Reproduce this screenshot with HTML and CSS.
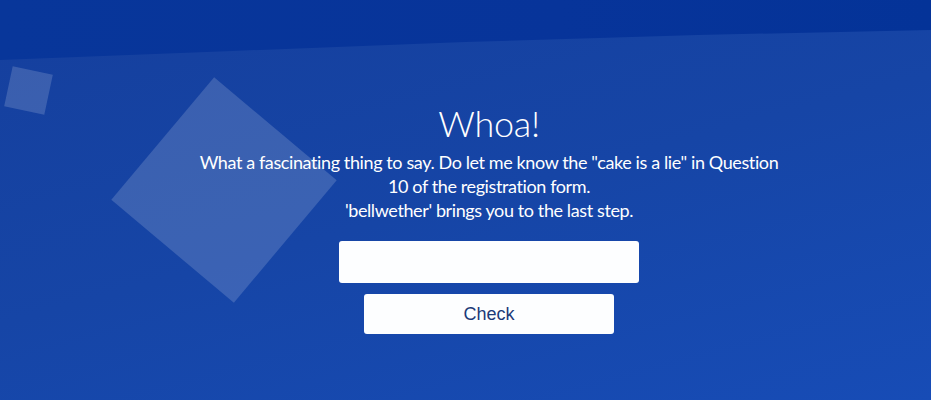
FILE: index.html
```html
<!DOCTYPE html>
<html lang="en">
<head>
<meta charset="utf-8">
<title>Whoa!</title>
<link rel="stylesheet" href="styles.css">
</head>
<body>
<div class="page">
  <div class="band"></div>
  <div class="shape shape-small"></div>
  <div class="shape shape-big"></div>
  <main class="content">
    <h1 class="title">Whoa!</h1>
    <p class="message">What a fascinating thing to say. Do let me know the "cake is a lie" in Question 10 of the registration form.<br>'bellwether' brings you to the last step.</p>
    <form class="form" onsubmit="return false;">
      <input class="answer" type="text" aria-label="Answer">
      <button class="check" type="submit">Check</button>
    </form>
  </main>
</div>
</body>
</html>
```
FILE: styles.css
```css
html, body {
  margin: 0;
  padding: 0;
}
body {
  font-family: Lato, "Liberation Sans", sans-serif;
  background: #1745ab;
}
.page {
  position: relative;
  height: 400px;
  overflow: hidden;
  background: linear-gradient(165deg, #153f9d 0%, #1645a6 50%, #174cb6 100%);
}
.band {
  position: absolute;
  top: 0;
  left: 0;
  right: 0;
  height: 62px;
  background: linear-gradient(90deg, #08369a 0%, #07349a 60%, #043398 100%);
  clip-path: polygon(0 0, 100% 0, 100% 30px, 75% 35px, 50% 42px, 25% 51px, 0 60px);
}
.shape {
  position: absolute;
  background: rgba(255, 255, 255, 0.16);
}
.shape-small {
  left: 8px;
  top: 70px;
  width: 41px;
  height: 41px;
  transform: rotate(12deg);
}
.shape-big {
  left: 144px;
  top: 110px;
  width: 160px;
  height: 160px;
  transform: rotate(40deg);
}
.content {
  position: relative;
  display: flex;
  flex-direction: column;
  align-items: center;
  padding: 101px 0 0 47px;
  color: #ffffff;
  text-align: center;
}
.title {
  margin: 0;
  font-size: 36px;
  font-weight: 300;
  line-height: 44px;
  letter-spacing: -0.3px;
}
.message {
  margin: 5px 0 0;
  width: 600px;
  font-size: 18px;
  line-height: 24px;
  letter-spacing: -0.39px;
}
.form {
  margin-top: 19px;
  display: flex;
  flex-direction: column;
  align-items: center;
  gap: 11px;
}
.answer {
  box-sizing: border-box;
  width: 300px;
  height: 42px;
  border: none;
  border-radius: 3px;
  background: #fdfeff;
  padding: 0 10px;
  font-size: 18px;
}
.check {
  box-sizing: border-box;
  width: 250px;
  height: 40px;
  border: none;
  border-radius: 3px;
  background: #fdfeff;
  color: #1d3a78;
  font-family: "Liberation Sans", Arial, sans-serif;
  font-size: 18px;
  cursor: pointer;
}
```
